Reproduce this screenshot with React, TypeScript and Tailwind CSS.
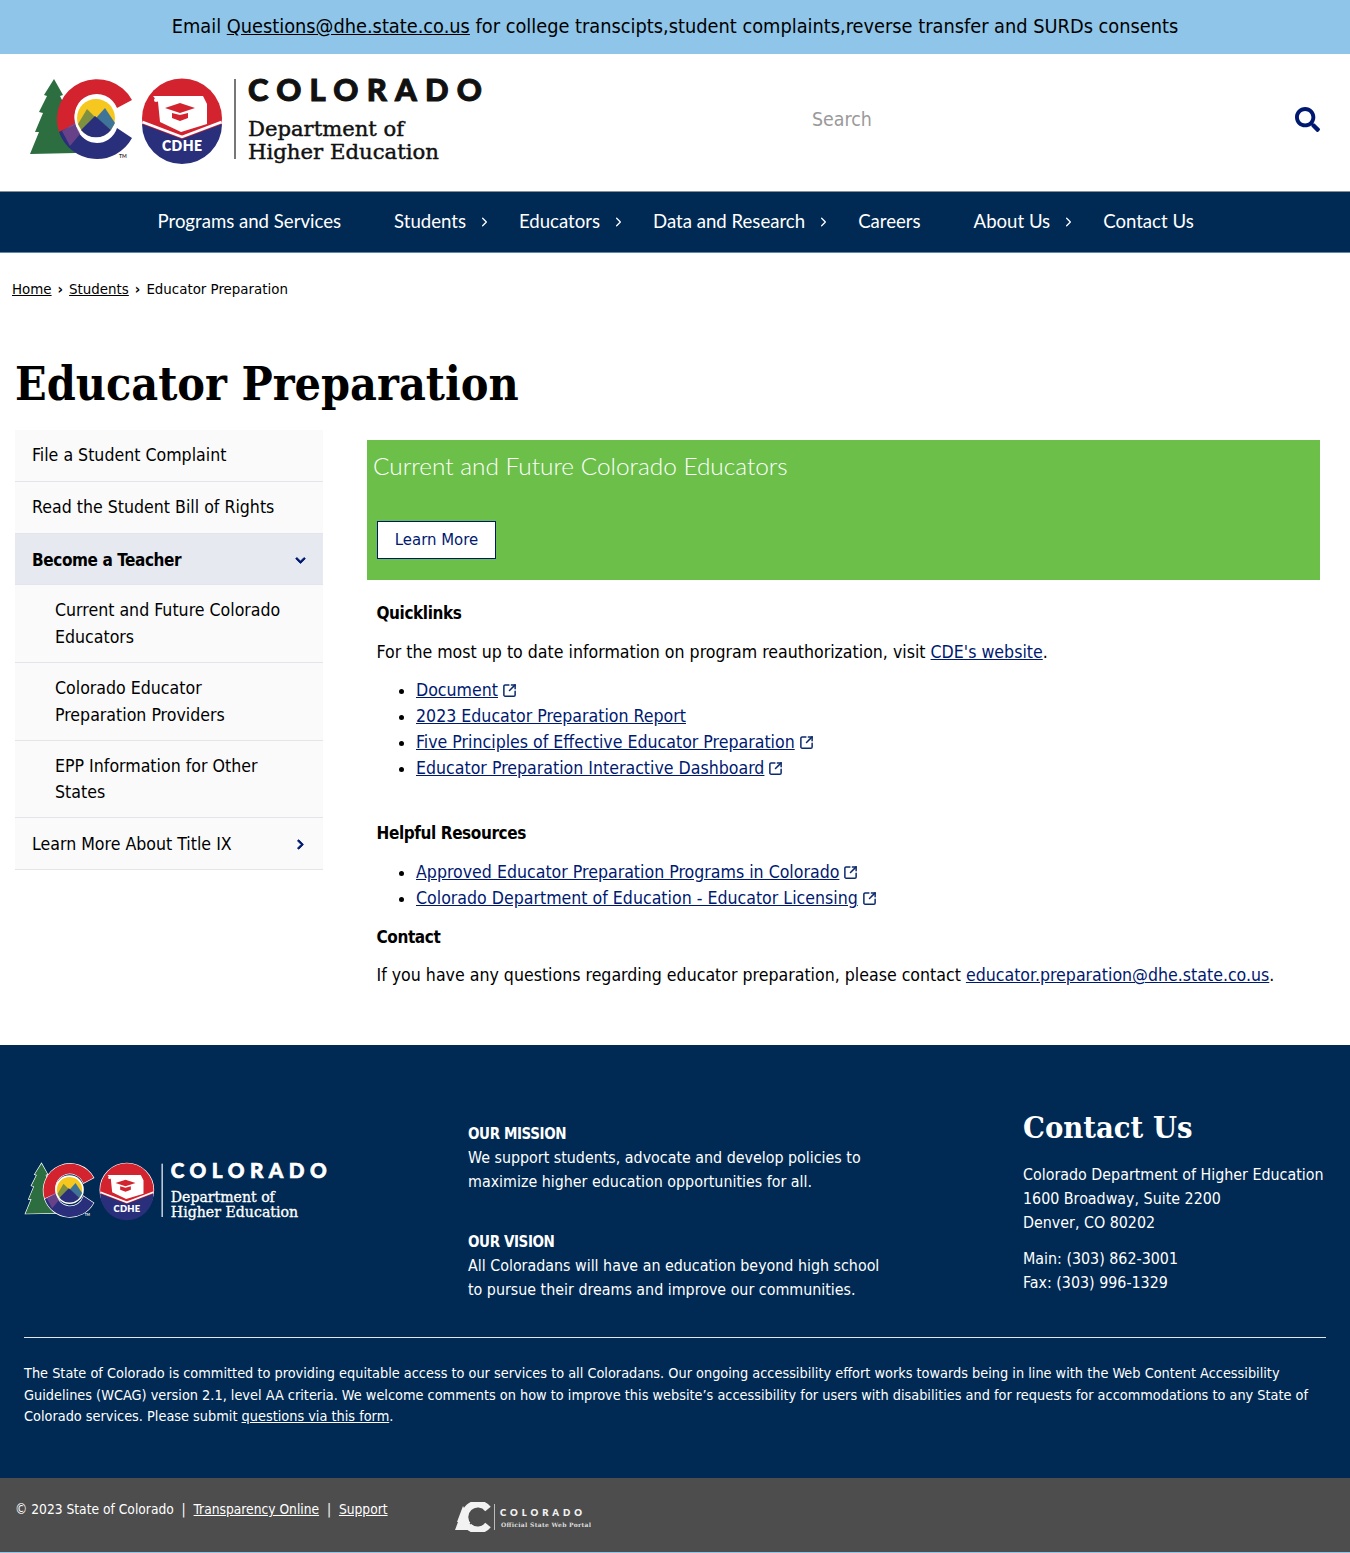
import React from "react";
import { SquareArrowOutUpRight, ChevronRight } from "lucide-react";
import { FaSearch, FaChevronDown, FaChevronRight } from "react-icons/fa";

const body = "font-['DejaVu_Sans_Condensed','DejaVu_Sans',sans-serif]";
const slab = "font-['DejaVu_Serif_Condensed','DejaVu_Serif',serif]";
const nav = "font-['Lato',sans-serif]";

function Mark({ outline }: { outline?: boolean }) {
  const s = outline ? { stroke: "#fff", strokeWidth: 2, paintOrder: "stroke" as const } : {};
  return (
    <>
      <path d="M54 79 L63 95 L60 96 L68 112 L65 113 L72 140 L76 153 L30 154 L39 132 L35 132 L43 113 L39 112 L47 96 L44 95 Z" fill="#2c6e3f" {...s} />
      <path d="M132 100 A40 40 0 0 0 59 132 L76 124 A21 21 0 0 1 117 108 Z" fill="#d2232f" {...s} />
      <path d="M59 132 A40 40 0 0 0 132 138 L117 128 A21 21 0 0 1 76 124 Z" fill="#2a2f7c" {...s} />
      <path d="M62 131 L76 122 L80 134 L70 146 Z" fill="#7c4a8c" opacity="0.75" />
      <circle cx="96" cy="118" r="21.5" fill="#fff" />
      <circle cx="96" cy="118" r="19" fill="#f6c81f" />
      <path d="M78 124 L87 109 L96 118 L82 131 Z" fill="#7f9040" />
      <path d="M96 118 L105 108 L115 123 L111 130 Z" fill="#3f7499" />
      <path d="M81 130 L95 116 L111 130 A19 19 0 0 1 81 130 Z" fill="#2a2f7c" />
      <text x="119" y="158" fill={outline ? "#fff" : "#333"} fontFamily="'Lato'" fontWeight="700" fontSize="5">TM</text>
      <circle cx="182" cy="118.500" r="40" fill="#d2232f" {...s} />
      <path d="M142 124 L182 139 L222 124 A40 40 0 0 1 142 124 Z" fill="#2a2f7c" />
      <path d="M142.500 122 L182 137 L221.500 122" fill="none" stroke="#fff" strokeWidth="2.5" />
      <path d="M153 96 L203 96 L207 104 L207 124 L181 132 L160 122 L158 102 Z" fill="#fff" />
      <circle cx="156" cy="100" r="2" fill="#fff" />
      <path d="M165 108 L180 103 L195 108 L180 113 Z" fill="#d2232f" />
      <path d="M172 113 L180 115 L188 113 L188 118 L180 121 L172 118 Z" fill="#d2232f" />
    </>
  );
}

function CdheLogo({ light, className }: { light?: boolean; className: string }) {
  const c = light ? "#fff" : "#111";
  return (
    <svg viewBox="28 66 460 108" className={className}>
      <Mark outline={light} />
      <text x="162" y="151" fill="#fff" fontFamily="'Lato'" fontWeight="800" fontSize="14" textLength="40">CDHE</text>
      <rect x="234" y="79" width="2" height="80" fill={light ? "#dfe5ec" : "#777"} />
      <text x="248" y="101" fill={c} stroke={c} strokeWidth="1" fontFamily="'Lato'" fontWeight="900" fontSize="31" textLength="234">COLORADO</text>
      <text x="248" y="136" fill={c} stroke={c} strokeWidth="0.45" fontFamily="'DejaVu Serif'" fontSize="21" textLength="156" lengthAdjust="spacingAndGlyphs">Department of</text>
      <text x="248" y="159" fill={c} stroke={c} strokeWidth="0.45" fontFamily="'DejaVu Serif'" fontSize="21" textLength="191" lengthAdjust="spacingAndGlyphs">Higher Education</text>
    </svg>
  );
}

function PortalLogo() {
  return (
    <svg viewBox="0 0 136 30" className="w-[136px] h-[30px] ml-[67px] shrink-0">
      <path d="M8 4 L11 10 L9 10 L13 28 L0 28 L3 20 L2 20 Z" fill="#f2f2f2" />
      <path d="M33 7 A13 13 0 1 0 33 23" fill="none" stroke="#f2f2f2" strokeWidth="7" />
      <circle cx="21" cy="15" r="6" fill="none" stroke="#4d4d4d" strokeWidth="1.5" />
      <path d="M15 22 L28 8" stroke="#4d4d4d" strokeWidth="1.2" />
      <rect x="39" y="2" width="1" height="26" fill="#bbb" />
      <text x="45" y="14" fill="#f2f2f2" fontFamily="'Lato'" fontWeight="800" fontSize="9.5" textLength="82">COLORADO</text>
      <text x="46" y="25" fill="#ddd" fontFamily="'DejaVu Serif'" fontWeight="700" fontSize="6" textLength="90">Official State Web Portal</text>
    </svg>
  );
}

function Ext() {
  return <SquareArrowOutUpRight className="inline-block w-[15px] h-[15px] ml-[4px] text-[#0b2a6b] align-[-2px]" strokeWidth={2.4} />;
}

function A({ children, ext }: { children: React.ReactNode; ext?: boolean }) {
  return (
    <>
      <a className="underline text-[#001970]">{children}</a>
      {ext && <Ext />}
    </>
  );
}

const navItems = [
  ["Programs and Services", false],
  ["Students", true],
  ["Educators", true],
  ["Data and Research", true],
  ["Careers", false],
  ["About Us", true],
  ["Contact Us", false],
] as const;

function SideItem({ children, bold, active, sub, icon }: { children: React.ReactNode; bold?: boolean; active?: boolean; sub?: boolean; icon?: React.ReactNode }) {
  return (
    <div className={`flex items-center justify-between border-b border-[#e3e5e8] ${active ? "bg-[#e6e9ef]" : "bg-[#fafafa]"} ${sub ? "pl-[40px] pr-[30px] pt-[12.1px] pb-[11.6px]" : bold ? "pl-[17px] pr-[17px] pt-[13.2px] pb-[11.1px]" : "pl-[17px] pr-[17px] pt-[12.4px] pb-[11.9px]"} ${bold ? "font-bold text-[17px] tracking-[-0.4px]" : ""}`}>
      <span className="leading-[26.5px] block">{children}</span>
      {icon}
    </div>
  );
}

const boldHead = "font-bold text-[17px] tracking-[-0.4px]";
const footHead = "font-bold text-[15px] tracking-[-0.4px]";

export default function App() {
  return (
    <div className={`${body} text-[17.6px] text-black bg-white`}>
      <div className="h-[54px] bg-[#8ec5e8] flex items-center justify-center text-[19.8px]">
        <span>Email <a className="underline">Questions@dhe.state.co.us</a> for college transcipts,student complaints,reverse transfer and SURDs consents</span>
      </div>

      <header className="h-[137px] flex items-center justify-between pl-[28px] pr-[30px] pb-[5px]">
        <CdheLogo className="w-[460px] h-[108px]" />
        <div className="flex items-center">
          <span className="text-[19.4px] text-[#9a9a9a] w-[483px]">Search</span>
          <FaSearch className="w-[25px] h-[25px] text-[#001970]" />
        </div>
      </header>

      <nav className="h-[62px] bg-[#002a54] flex justify-center border-t border-[#8a8f96] border-b border-b-[#5d88ab]">
        <div className={`flex items-center w-[1089px] ${nav} text-[18.6px] text-white whitespace-nowrap`}>
          {navItems.map(([label, arrow]) => (
            <div key={label} className="flex items-center pl-[27px] shrink-0">
              <span>{label}</span>
              <span className="w-[26px] flex items-center pl-[11px]">
                {arrow && <ChevronRight className="w-[16px] h-[16px]" strokeWidth={2} />}
              </span>
            </div>
          ))}
        </div>
      </nav>

      <div className="pl-[12px] pt-[26px] text-[14.9px] leading-[20px] flex items-center gap-[6px]">
        <a className="underline">Home</a><span className="font-bold">›</span><a className="underline">Students</a><span className="font-bold">›</span><span>Educator Preparation</span>
      </div>

      <h1 className={`${slab} font-bold text-[46.2px] leading-[56px] pl-[15px] mt-[57px]`}>Educator Preparation</h1>

      <main className="flex pl-[15px] pr-[30px] mt-[18px] h-[615px]">
        <aside className="w-[308px] shrink-0">
          <SideItem>File a Student Complaint</SideItem>
          <SideItem>Read the Student Bill of Rights</SideItem>
          <SideItem bold active icon={<FaChevronDown className="w-[11px] h-[11px] text-[#001970] stroke-[40px]" />}>Become a Teacher</SideItem>
          <SideItem sub>Current and Future Colorado Educators</SideItem>
          <SideItem sub>Colorado Educator Preparation Providers</SideItem>
          <SideItem sub>EPP Information for Other States</SideItem>
          <SideItem icon={<FaChevronRight className="w-[11px] h-[11px] text-[#001970] stroke-[40px]" />}>Learn More About Title IX</SideItem>
        </aside>

        <section className="ml-[44px] flex-1 pt-[10px]">
          <div className="h-[140px] bg-[#6cc04a] pl-[6px] pt-[9px]">
            <h2 className={`${nav} text-[24.4px] leading-[34px] font-light text-white`}>Current and Future Colorado Educators</h2>
            <button className="mt-[38px] ml-[4px] h-[38px] w-[119px] pt-[1px] bg-white border border-[#001970] text-[#001970] text-[16.6px]">Learn More</button>
          </div>

          <div className="pl-[9.5px] leading-[26.3px]">
            <p className={`${boldHead} mt-[20px]`}>Quicklinks</p>
            <p className="mt-[13px]">For the most up to date information on program reauthorization, visit <A>CDE's website</A>.</p>
            <ul className="list-disc pl-[39.5px] mt-[11px]">
              <li><A ext>Document</A></li>
              <li><A>2023 Educator Preparation Report</A></li>
              <li><A ext>Five Principles of Effective Educator Preparation</A></li>
              <li><A ext>Educator Preparation Interactive Dashboard</A></li>
            </ul>
            <p className={`${boldHead} mt-[38px]`}>Helpful Resources</p>
            <ul className="list-disc pl-[39.5px] mt-[13px]">
              <li><A ext>Approved Educator Preparation Programs in Colorado</A></li>
              <li><A ext>Colorado Department of Education - Educator Licensing</A></li>
            </ul>
            <p className={`${boldHead} mt-[12px]`}>Contact</p>
            <p className="mt-[12.500px]">If you have any questions regarding educator preparation, please contact <A>educator.preparation@dhe.state.co.us</A>.</p>
          </div>
        </section>
      </main>

      <footer className="bg-[#002a54] text-white h-[433px] px-[24px] pt-[62px] text-[15.87px] leading-[24px]">
        <div className="flex h-[231px] border-b border-[#dfe5ec]">
          <div className="w-[444px] shrink-0 pt-[48px]">
            <CdheLogo light className="w-[307px] h-[72px]" />
          </div>
          <div className="w-[555px] shrink-0 pt-[14.500px]">
            <p className={footHead}>OUR MISSION</p>
            <p>We support students, advocate and develop policies to<br />maximize higher education opportunities for all.</p>
            <p className={`${footHead} mt-[36px]`}>OUR VISION</p>
            <p>All Coloradans will have an education beyond high school<br />to pursue their dreams and improve our communities.</p>
          </div>
          <div className="whitespace-nowrap">
            <h2 className={`${slab} font-bold text-[30.6px] leading-[40px]`}>Contact Us</h2>
            <p className="mt-[16px]">Colorado Department of Higher Education<br />1600 Broadway, Suite 2200<br />Denver, CO 80202</p>
            <p className="mt-[12px]">Main: (303) 862-3001<br />Fax: (303) 996-1329</p>
          </div>
        </div>
        <p className="mt-[25px] text-[14.37px] leading-[21.5px]">
          The State of Colorado is committed to providing equitable access to our services to all Coloradans. Our ongoing accessibility effort works towards being in line with the Web Content Accessibility Guidelines (WCAG) version 2.1, level AA criteria. We welcome comments on how to improve this website’s accessibility for users with disabilities and for requests for accommodations to any State of Colorado services. Please submit <a className="underline">questions via this form</a>.
        </p>
      </footer>

      <div className="h-[75px] bg-[#4d4d4d] border-b-[1px] border-[#8ec5e8] text-white text-[13.7px] flex items-start pl-[15px] pt-[24px]">
        <span className="leading-[14px]">© 2023 State of Colorado &nbsp;|&nbsp; <a className="underline">Transparency Online</a> &nbsp;|&nbsp; <a className="underline">Support</a></span>
        <PortalLogo />
      </div>
    </div>
  );
}
